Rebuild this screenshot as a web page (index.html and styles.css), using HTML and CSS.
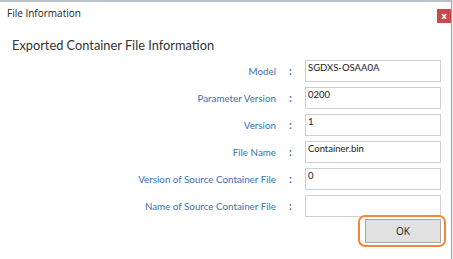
FILE: index.html
```html
<!DOCTYPE html>
<html lang="en">
<head>
    <meta charset="UTF-8">
    <meta name="viewport" content="width=device-width, initial-scale=1.0">
    <title>File Information</title>
    <link rel="stylesheet" href="styles.css">
</head>
<body>

    <div class="dialog">
        <div class="title-bar">
            <span class="title">File Information</span>
            <button class="btn-close">x</button>
        </div>

        <h3 class="heading">Exported Container File Information</h3>

        <div class="form-grid">
            <label for="model">Model</label>
            <span class="colon">:</span>
            <input type="text" id="model" value="SGDXS-OSAA0A" readonly>

            <label for="param-version">Parameter Version</label>
            <span class="colon">:</span>
            <input type="text" id="param-version" value="0200" readonly>

            <label for="version">Version</label>
            <span class="colon">:</span>
            <input type="text" id="version" value="1" readonly>

            <label for="file-name">File Name</label>
            <span class="colon">:</span>
            <input type="text" id="file-name" value="Container.bin" readonly>

            <label for="src-version">Version of Source Container File</label>
            <span class="colon">:</span>
            <input type="text" id="src-version" value="0" readonly>

            <label for="src-name">Name of Source Container File</label>
            <span class="colon">:</span>
            <input type="text" id="src-name" value="" readonly>
        </div>

        <div class="form-actions">
            <div class="focus-ring">
                <button class="btn-ok">OK</button>
            </div>
        </div>
    </div>

</body>
</html>
```

FILE: styles.css
```css
html, body {
    margin: 0;
    padding: 0;
}
body {
    font-family: "Open Sans", "Noto Sans", sans-serif;
    background: #e9eaeb;
    width: 453px;
    height: 259px;
    overflow: hidden;
}
.dialog {
    width: 451px;
    height: 257px;
    background: #fff;
    border-top: 2px solid #b9c1c9;
    border-right: 1px solid #a3a3a3;
}
.title-bar {
    display: flex;
    align-items: center;
    justify-content: space-between;
    height: 22px;
    padding: 0 0 0 7px;
}
.title {
    font-size: 10px;
    color: #222;
}
.btn-close {
    width: 14px;
    height: 14px;
    padding: 0;
    margin-top: 6px;
    border: none;
    background: #c94849;
    color: #fff;
    font-family: "Open Sans", sans-serif;
    font-size: 9px;
    font-weight: bold;
    line-height: 12px;
}
.heading {
    margin: 12px 0 0 12px;
    font-family: Lato, "Open Sans", sans-serif;
    font-size: 12.8px;
    font-weight: normal;
    line-height: 19px;
    color: #333;
}
.form-grid {
    display: grid;
    grid-template-columns: 1fr 29px 136px;
    grid-auto-rows: 22px;
    row-gap: 5px;
    align-items: center;
    margin-top: 5px;
    padding-right: 10px;
}
.form-grid label {
    text-align: right;
    font-family: Lato, "Open Sans", sans-serif;
    font-size: 9.8px;
    color: #3d70b2;
}
.colon {
    text-align: center;
    font-size: 10px;
    color: #3d70b2;
    font-weight: bold;
}
.form-grid input {
    box-sizing: border-box;
    height: 22px;
    width: 136px;
    margin: 0;
    padding: 0 2px 8px;
    border: 1px solid #cfcfcf;
    font-family: Lato, "Open Sans", sans-serif;
    font-size: 9.5px;
    color: #222;
    outline: none;
}
.form-actions {
    display: flex;
    justify-content: flex-end;
    margin-top: -2px;
    padding-right: 5px;
}
.focus-ring {
    border: 2px solid #f2873a;
    border-radius: 7px;
    padding: 2px 3px 2px 5px;
}
.btn-ok {
    display: block;
    width: 76px;
    height: 24px;
    border: 1px solid #a9a9a9;
    background: #e1e1e1;
    font-family: "Open Sans", sans-serif;
    font-size: 10px;
    color: #222;
}
```
